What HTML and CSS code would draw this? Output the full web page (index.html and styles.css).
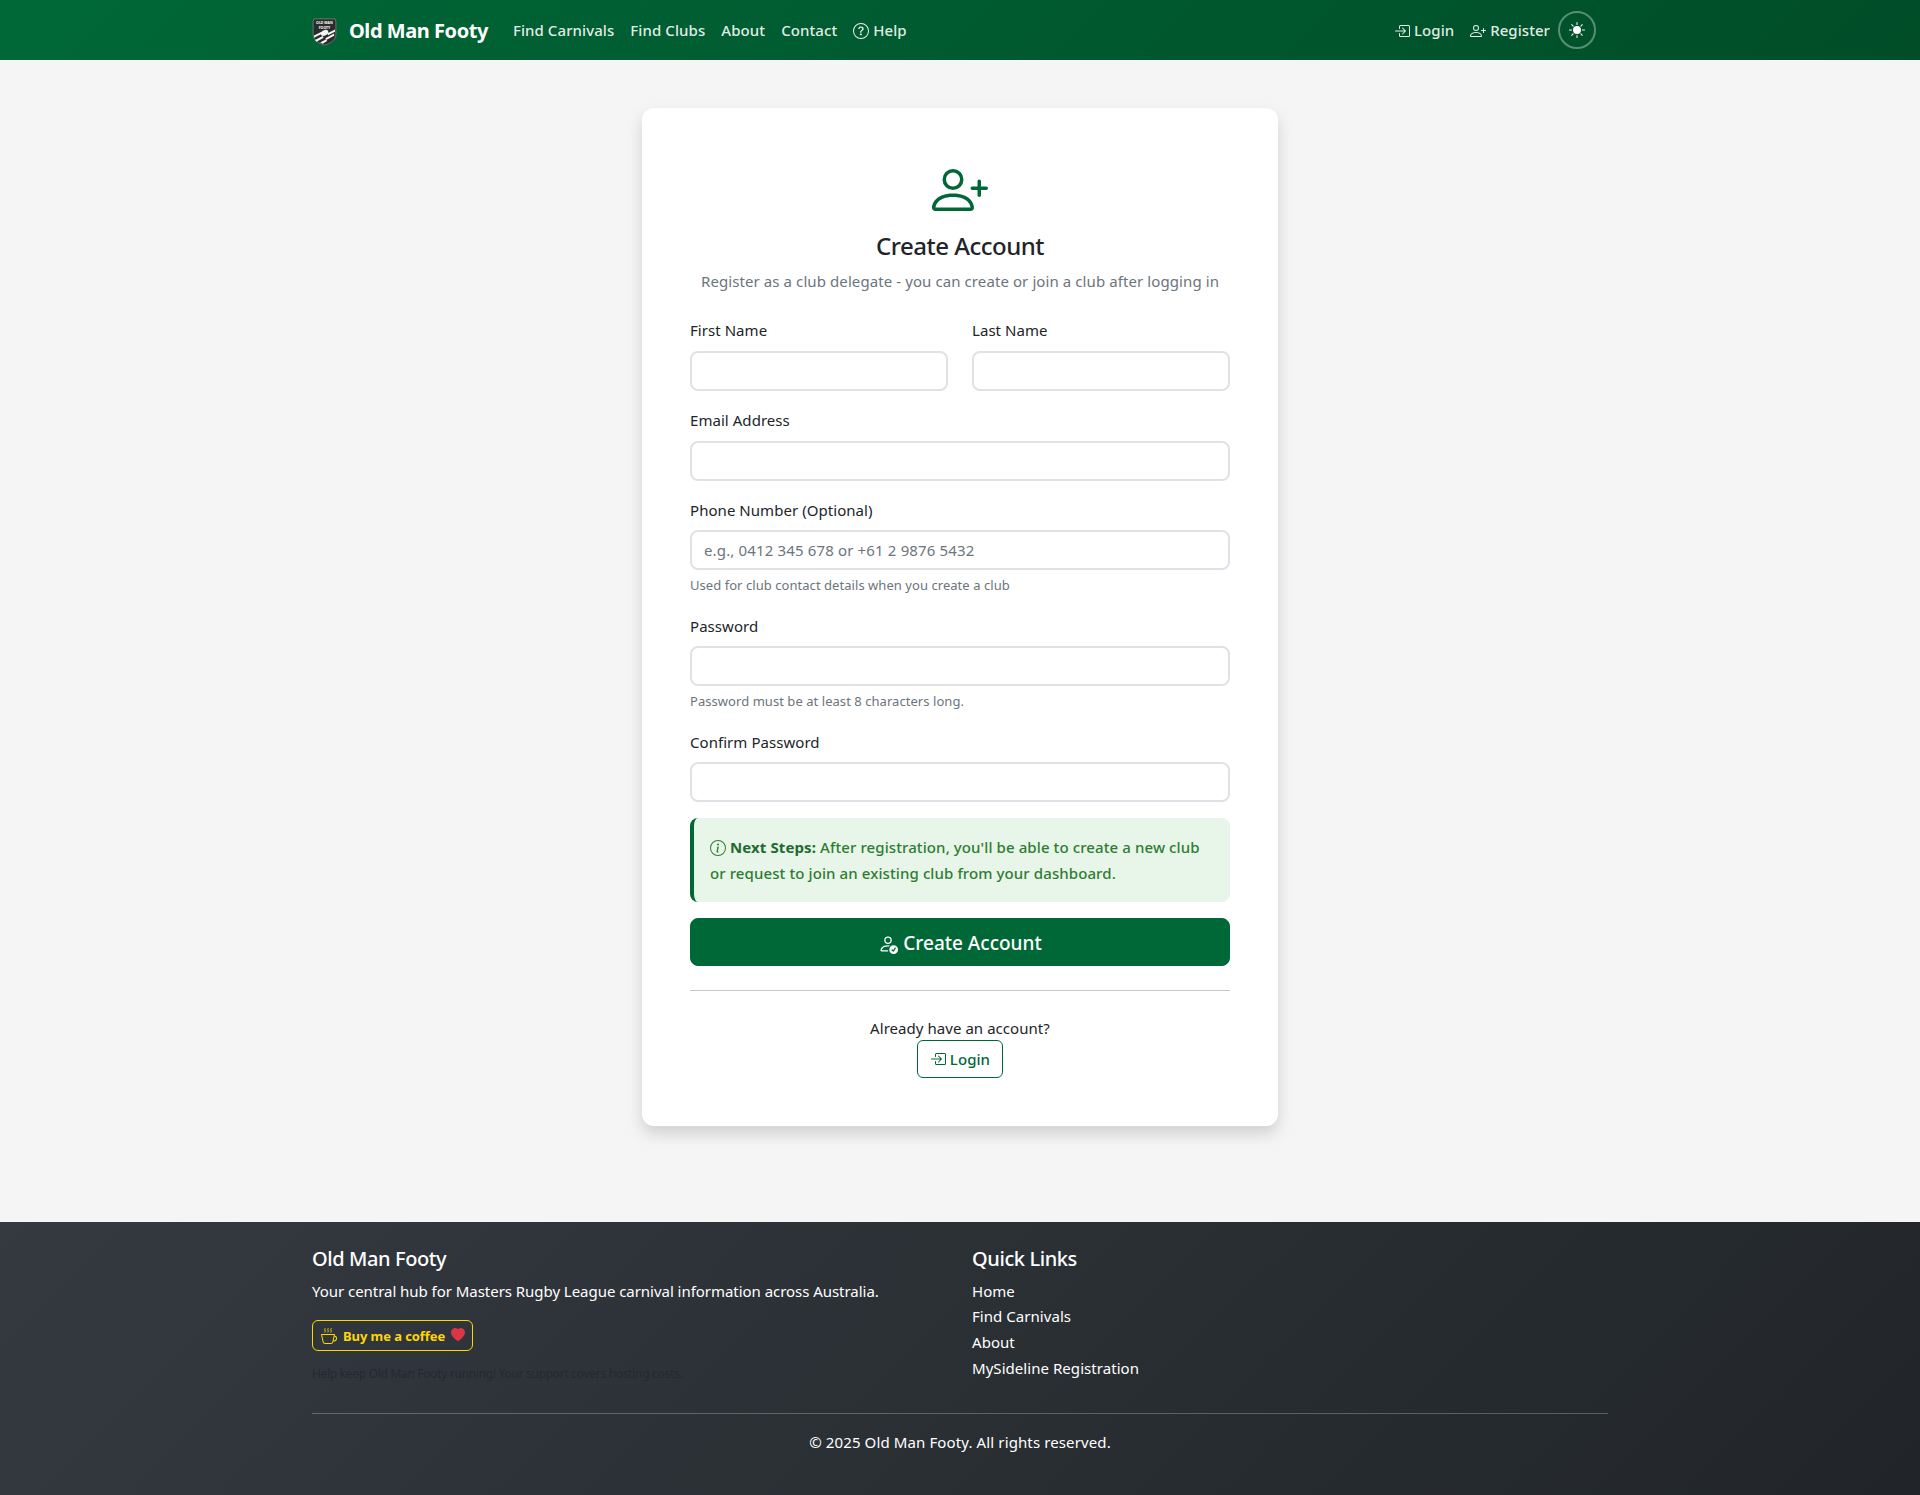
FILE: index.html
```html
<!DOCTYPE html>
<html lang="en">
<head>
<meta charset="utf-8">
<title>Create Account - Old Man Footy</title>
<link rel="stylesheet" href="styles.css">
</head>
<body>
<svg class="sprite" width="0" height="0">
  <defs>
    <symbol id="login" viewBox="0 0 16 16"><path fill-rule="evenodd" d="M6 3.5a.5.5 0 0 1 .5-.5h8a.5.5 0 0 1 .5.5v9a.5.5 0 0 1-.5.5h-8a.5.5 0 0 1-.5-.5v-2a.5.5 0 0 0-1 0v2A1.5 1.5 0 0 0 6.5 14h8a1.5 1.5 0 0 0 1.5-1.5v-9A1.5 1.5 0 0 0 14.5 2h-8A1.5 1.5 0 0 0 5 3.5v2a.5.5 0 0 0 1 0z"/><path fill-rule="evenodd" d="M11.854 8.354a.5.5 0 0 0 0-.708l-3-3a.5.5 0 1 0-.708.708L10.293 7.5H1.5a.5.5 0 0 0 0 1h8.793l-2.147 2.146a.5.5 0 0 0 .708.708z"/></symbol>
    <symbol id="person-plus" viewBox="0 0 16 16"><path d="M6 8a3 3 0 1 0 0-6 3 3 0 0 0 0 6m2-3a2 2 0 1 1-4 0 2 2 0 0 1 4 0m4 8c0 1-1 1-1 1H1s-1 0-1-1 1-4 6-4 6 3 6 4m-1-.004c-.001-.246-.154-.986-.832-1.664C9.516 10.68 8.289 10 6 10s-3.516.68-4.168 1.332c-.678.678-.83 1.418-.832 1.664z"/><path fill-rule="evenodd" d="M13.5 5a.5.5 0 0 1 .5.5V7h1.5a.5.5 0 0 1 0 1H14v1.5a.5.5 0 0 1-1 0V8h-1.5a.5.5 0 0 1 0-1H13V5.5a.5.5 0 0 1 .5-.5"/></symbol>
    <symbol id="circle" viewBox="0 0 16 16"><path d="M8 15A7 7 0 1 1 8 1a7 7 0 0 1 0 14m0 1A8 8 0 1 0 8 0a8 8 0 0 0 0 16"/></symbol>
  </defs>
</svg>
<header class="topbar">
  <div class="container topbar-inner">
    <a class="brand" href="#">
      <svg class="logo" viewBox="0 0 28 32">
        <path d="M2 1h24l1 3v15c0 6-6 10-13 12C7 29 1 25 1 19V4z" fill="#2b2b2b" stroke="#8a8a8a" stroke-width=".8"/>
        <text class="logo-text" x="14" y="7" text-anchor="middle">OLD MAN</text>
        <text class="logo-text" x="14" y="12" text-anchor="middle">FOOTY</text>
        <path d="M2 20l8-4v2.6l-8 4zM18 17l8-4v2.6l-8 4zM3 25l9-4.5 1 2.2-8 4.3zM15 23l10-5.4v2.6l-9 5zM9 28l7-3.6 1 2-5 3z" fill="#f2f2f2"/>
        <ellipse cx="14" cy="17" rx="4.6" ry="3" fill="#f7f7f7" transform="rotate(-25 14 17)"/>
      </svg>
      <span>Old Man Footy</span>
    </a>
    <nav class="nav-main">
      <a class="nav-link" href="#">Find Carnivals</a>
      <a class="nav-link" href="#">Find Clubs</a>
      <a class="nav-link" href="#">About</a>
      <a class="nav-link" href="#">Contact</a>
      <a class="nav-link" href="#"><svg class="icon" viewBox="0 0 16 16"><use href="#circle"/><path d="M5.255 5.786a.237.237 0 0 0 .241.247h.825c.138 0 .248-.113.266-.25.09-.656.54-1.134 1.342-1.134.686 0 1.314.343 1.314 1.168 0 .635-.374.927-.965 1.371-.673.489-1.206 1.06-1.168 1.987l.003.217a.25.25 0 0 0 .25.246h.811a.25.25 0 0 0 .25-.25v-.105c0-.718.273-.927 1.01-1.486.609-.463 1.244-.977 1.244-2.056 0-1.511-1.276-2.241-2.673-2.241-1.267 0-2.655.59-2.75 2.286m1.557 5.763c0 .533.425.927 1.01.927.609 0 1.028-.394 1.028-.927 0-.552-.42-.94-1.029-.94-.584 0-1.009.388-1.009.94"/></svg> Help</a>
    </nav>
    <nav class="nav-side">
      <a class="nav-link" href="#"><svg class="icon"><use href="#login"/></svg> Login</a>
      <a class="nav-link" href="#"><svg class="icon"><use href="#person-plus"/></svg> Register</a>
      <button class="theme-toggle" type="button" aria-label="Toggle theme">
        <svg class="icon" viewBox="0 0 16 16"><path d="M8 12a4 4 0 1 0 0-8 4 4 0 0 0 0 8M8 0a.5.5 0 0 1 .5.5v2a.5.5 0 0 1-1 0v-2A.5.5 0 0 1 8 0m0 13a.5.5 0 0 1 .5.5v2a.5.5 0 0 1-1 0v-2A.5.5 0 0 1 8 13m8-5a.5.5 0 0 1-.5.5h-2a.5.5 0 0 1 0-1h2a.5.5 0 0 1 .5.5M3 8a.5.5 0 0 1-.5.5h-2a.5.5 0 0 1 0-1h2A.5.5 0 0 1 3 8m10.657-5.657a.5.5 0 0 1 0 .707l-1.414 1.415a.5.5 0 1 1-.707-.708l1.414-1.414a.5.5 0 0 1 .707 0m-9.193 9.193a.5.5 0 0 1 0 .707L3.05 13.657a.5.5 0 0 1-.707-.707l1.414-1.414a.5.5 0 0 1 .707 0m9.193 2.121a.5.5 0 0 1-.707 0l-1.414-1.414a.5.5 0 0 1 .707-.707l1.414 1.414a.5.5 0 0 1 0 .707M4.464 4.465a.5.5 0 0 1-.707 0L2.343 3.05a.5.5 0 1 1 .707-.707l1.414 1.414a.5.5 0 0 1 0 .708"/></svg>
      </button>
    </nav>
  </div>
</header>

<main class="page">
  <section class="card">
    <div class="card-head">
      <svg class="head-icon"><use href="#person-plus"/></svg>
      <h1 class="card-title">Create Account</h1>
      <p class="card-sub">Register as a club delegate - you can create or join a club after logging in</p>
    </div>
    <form class="form">
      <div class="field-row">
        <div class="field"><label class="label">First Name</label><input class="input" type="text"></div>
        <div class="field"><label class="label">Last Name</label><input class="input" type="text"></div>
      </div>
      <div class="field"><label class="label">Email Address</label><input class="input" type="email"></div>
      <div class="field"><label class="label">Phone Number (Optional)</label><input class="input" type="tel" placeholder="e.g., 0412 345 678 or +61 2 9876 5432"><div class="hint">Used for club contact details when you create a club</div></div>
      <div class="field"><label class="label">Password</label><input class="input" type="password"><div class="hint">Password must be at least 8 characters long.</div></div>
      <div class="field"><label class="label">Confirm Password</label><input class="input" type="password"></div>
      <div class="notice"><svg class="icon" viewBox="0 0 16 16"><use href="#circle"/><path d="m8.93 6.588-2.29.287-.082.38.45.083c.294.07.352.176.288.469l-.738 3.468c-.194.897.105 1.319.808 1.319.545 0 1.178-.252 1.465-.598l.088-.416c-.2.176-.492.246-.686.246-.275 0-.375-.193-.304-.533zM9 4.5a1 1 0 1 1-2 0 1 1 0 0 1 2 0"/></svg> <strong>Next Steps:</strong> After registration, you'll be able to create a new club or request to join an existing club from your dashboard.</div>
      <button class="btn-primary" type="button"><svg class="icon" viewBox="0 0 16 16"><path d="M12.5 16a3.5 3.5 0 1 0 0-7 3.5 3.5 0 0 0 0 7m1.679-4.493-1.335 2.226a.75.75 0 0 1-1.174.144l-.774-.773a.5.5 0 0 1 .708-.708l.547.548 1.17-1.951a.5.5 0 1 1 .858.514M11 5a3 3 0 1 1-6 0 3 3 0 0 1 6 0M8 7a2 2 0 1 0 0-4 2 2 0 0 0 0 4"/><path d="M8.256 14a4.5 4.5 0 0 1-.229-1.004H3c.001-.246.154-.986.832-1.664C4.484 10.68 5.711 10 8 10q.39 0 .74.025c.226-.341.496-.65.804-.918Q8.844 9.002 8 9c-5 0-6 3-6 4s1 1 1 1z"/></svg> Create Account</button>
    </form>
    <hr class="divider">
    <div class="card-foot">
      <p class="foot-text">Already have an account?</p>
      <a class="btn-outline" href="#"><svg class="icon"><use href="#login"/></svg> Login</a>
    </div>
  </section>
</main>

<footer class="footer">
  <div class="container">
    <div class="footer-cols">
      <div class="footer-col">
        <h5 class="footer-title">Old Man Footy</h5>
        <p class="footer-text">Your central hub for Masters Rugby League carnival information across Australia.</p>
        <a class="coffee" href="#">
          <svg class="icon" viewBox="0 0 16 16"><path fill-rule="evenodd" d="M.5 6a.5.5 0 0 0-.488.608l1.652 7.434A2.5 2.5 0 0 0 4.104 16h5.792a2.5 2.5 0 0 0 2.44-1.958l.131-.59a3 3 0 0 0 1.3-5.854l.221-.99A.5.5 0 0 0 13.5 6zM13 12.5a2 2 0 0 1-.316-.025l.867-3.898A2.001 2.001 0 0 1 13 12.5M2.64 13.825 1.123 7h11.754l-1.517 6.825A1.5 1.5 0 0 1 9.896 15H4.104a1.5 1.5 0 0 1-1.464-1.175"/><path d="M4 .6c-1.2 1.4 1.2 2 0 3.6M7 .6c-1.2 1.4 1.2 2 0 3.6M10 .6c-1.2 1.4 1.2 2 0 3.6" stroke="currentColor" stroke-width="1" stroke-linecap="round" fill="none"/></svg>
          <span class="coffee-label">Buy me a coffee</span>
          <svg class="heart" viewBox="0 0 16 16"><path fill-rule="evenodd" d="M8 1.314C12.438-3.248 23.534 4.735 8 15-7.534 4.736 3.562-3.248 8 1.314"/></svg>
        </a>
        <p class="support">Help keep Old Man Footy running! Your support covers hosting costs.</p>
      </div>
      <div class="footer-col">
        <h5 class="footer-title">Quick Links</h5>
        <ul class="links">
          <li><a href="#">Home</a></li>
          <li><a href="#">Find Carnivals</a></li>
          <li><a href="#">About</a></li>
          <li><a href="#">MySideline Registration</a></li>
        </ul>
      </div>
    </div>
    <hr class="footer-rule">
    <p class="copyright">© 2025 Old Man Footy. All rights reserved.</p>
  </div>
</footer>
</body>
</html>
```
FILE: styles.css
```css
* { box-sizing: border-box; }
html, body { margin: 0; padding: 0; }
body {
  font-family: "Noto Sans", "Open Sans", "Liberation Sans", sans-serif;
  font-size: 15px;
  letter-spacing: 0.05px;
  line-height: 25.6px;
  color: #212529;
  background: #f5f5f5;
}
a { color: inherit; text-decoration: none; }
.sprite { position: absolute; }
.icon { width: 16px; height: 16px; fill: currentColor; vertical-align: -2.5px; }
.container { width: 1320px; margin: 0 auto; padding: 0 12px; }

.topbar { height: 60px; background: linear-gradient(135deg, #006837 0%, #004d28 100%); color: #fff; }
.topbar-inner { display: flex; align-items: center; height: 60px; }
.brand { display: flex; align-items: center; gap: 12px; font-size: 20px; font-weight: 700; letter-spacing: -0.45px; margin-right: 17px; padding-top: 1px; }
.logo { width: 25px; height: 28px; margin-top: 2px; }
.logo-text { font-size: 4px; font-weight: 700; fill: #fff; letter-spacing: 0; }
.nav-main { display: flex; }
.nav-main .nav-link { letter-spacing: 0.08px; }
.nav-side { display: flex; align-items: center; margin-left: auto; margin-right: 12px; }
.nav-link { padding: 9px 8px 7px; font-weight: 500; color: rgba(255,255,255,.9); }
.theme-toggle { width: 38px; height: 38px; margin-left: 0; padding: 0; display: flex; align-items: center; justify-content: center; border: 2px solid rgba(255,255,255,.35); border-radius: 50%; background: transparent; color: #fff; }

.page { padding: 48px 0; }
.card { width: 636px; margin: 0 auto 48px; padding: 48px; background: #fff; border-radius: 12px; box-shadow: 0 8px 16px rgba(0,0,0,.15); }
.card-head { display: flex; flex-direction: column; align-items: center; margin-bottom: 23px; }
.head-icon { width: 56px; height: 56px; margin: 6px 0 14px; fill: #006837; display: block; }
.card-title { margin: 0 0 8px; font-size: 24px; line-height: 28.8px; font-weight: 500; letter-spacing: -0.5px; }
.card-sub { margin: 0; color: #6c757d; letter-spacing: 0.09px; }
.form { display: flex; flex-direction: column; gap: 16px; }
.field-row { display: grid; grid-template-columns: 1fr 1fr; gap: 24px; }
.label { display: block; padding-top: 1px; margin-bottom: 7px; }
.input { display: block; width: 100%; height: 40px; padding: 6px 12px; border: 2px solid #dee2e6; border-radius: 8px; background: #fff; font: inherit; letter-spacing: 0.15px; color: #212529; }
.input::placeholder { color: #6c757d; opacity: 1; }
.hint { margin-top: 4px; font-size: 13px; line-height: 22.4px; color: #6c757d; letter-spacing: 0.05px; }
.notice { padding: 16px; line-height: 26px; border-left: 4px solid #006837; border-radius: 8px; background: #e8f5e9; color: #2e7d32; font-weight: 500; letter-spacing: 0.1px; }
.notice strong { font-weight: 700; color: #1f6b32; }
.btn-primary { display: block; height: 48px; padding: 2px 0 0; border: 1px solid #006837; border-radius: 8px; background: #006837; color: #fff; font-family: inherit; font-size: 19px; font-weight: 500; letter-spacing: 0; }
.btn-primary .icon { width: 20px; height: 20px; vertical-align: -4px; }
.divider { height: 1px; border: 0; margin: 24px 0 23px; background: #c8c8c8; }
.card-foot { display: flex; flex-direction: column; align-items: center; }
.foot-text { margin: 0 0 -2px; padding-top: 2px; }
.btn-outline { display: block; height: 38px; padding: 6px 12px; line-height: 24px; border: 1px solid #006837; border-radius: 6px; color: #006837; font-weight: 500; }

.footer { height: 273px; padding-top: 25px; background: linear-gradient(135deg, #343a40 0%, #212529 100%); color: #fff; }
.footer-cols { display: grid; grid-template-columns: 648px 1fr; gap: 12px; }
.footer-title { margin: 0 0 8px; font-size: 20px; line-height: 24px; font-weight: 500; letter-spacing: -0.4px; }
.footer-text { margin: 0 0 16px; letter-spacing: -0.04px; }
.coffee { display: inline-flex; align-items: center; gap: 6px; height: 31px; padding: 0 7px 0 8px; border: 1px solid #ffd700; border-radius: 6px; color: #ffd700; font-size: 13px; font-weight: 700; letter-spacing: -0.08px; }
.coffee-label { padding-top: 1px; }
.heart { width: 14px; height: 14px; fill: #dc3545; margin-top: -2px; }
.support { margin: 10px 0 0; font-size: 12px; color: rgba(33,37,41,.75); letter-spacing: -0.3px; }
.links { list-style: none; margin: 0; padding: 0; }
.footer-rule { height: 1px; margin: 26px 0 16px; border: 0; background: rgba(255,255,255,.25); }
.copyright { margin: 0; text-align: center; letter-spacing: 0.12px; }
```
